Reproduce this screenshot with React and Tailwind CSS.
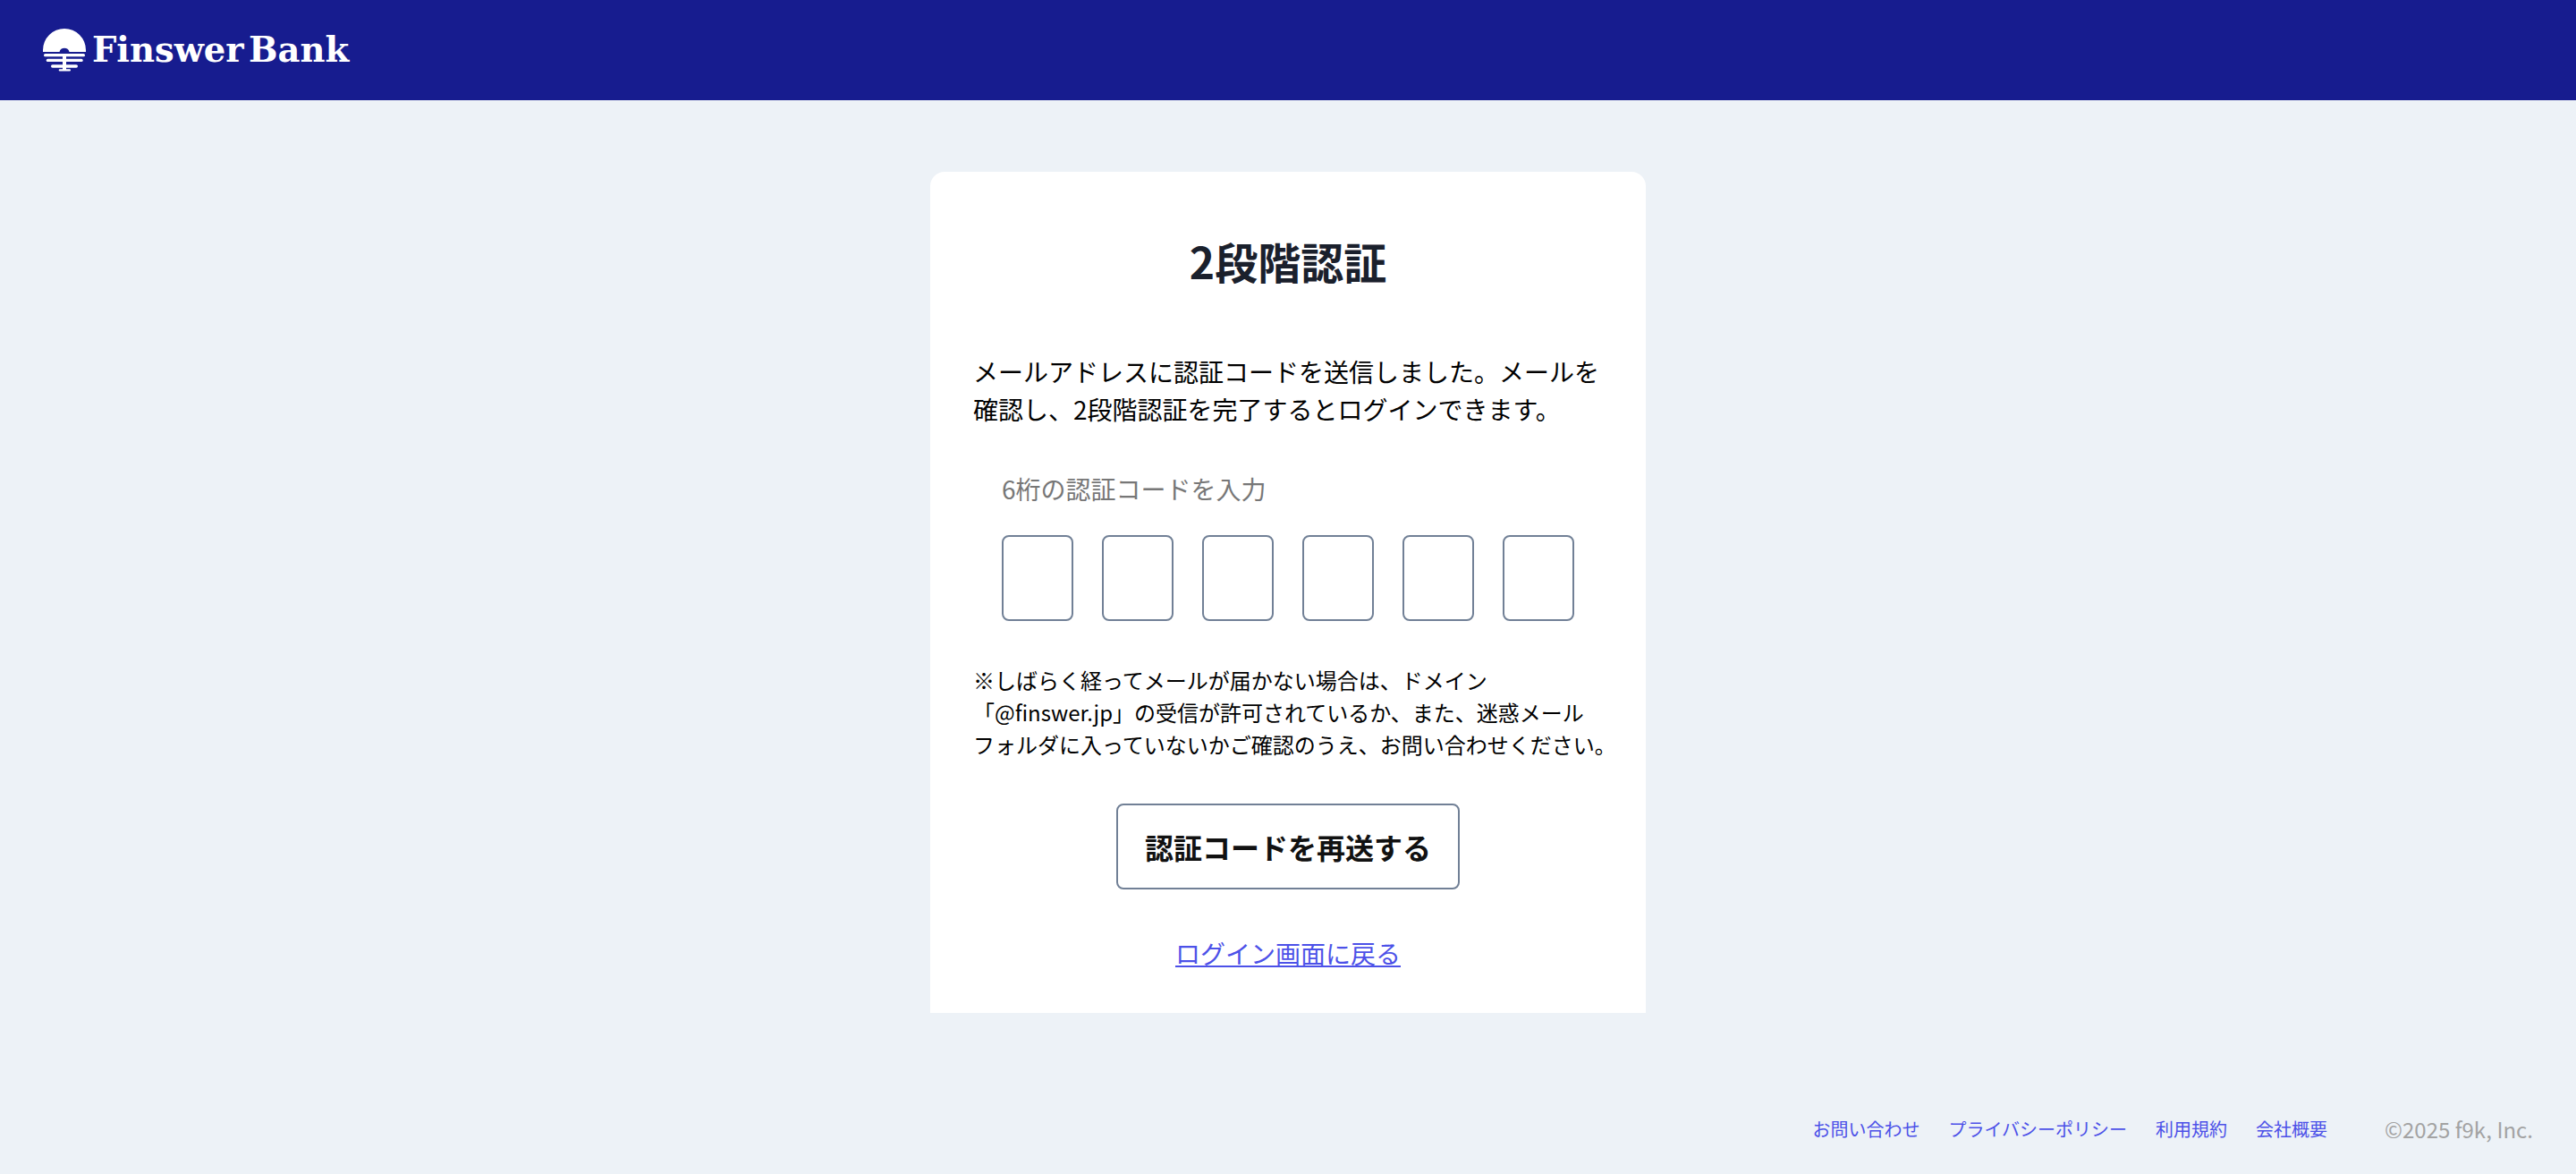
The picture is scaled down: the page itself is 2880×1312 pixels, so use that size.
import React from 'react';

const footerLinks = ['お問い合わせ', 'プライバシーポリシー', '利用規約', '会社概要'];

function Logo() {
  return (
    <div className="flex items-center">
      <svg width="50" height="50" viewBox="0 0 50 50" className="block" fill="#fff">
        <path d="M1 27v-2a24 24 0 0 1 48 0v2H30.500a5.700 5.700 0 0 0-11 0z" />
        <rect x="2" y="29" width="46" height="3.300" rx="1.600" />
        <rect x="4.700" y="34.700" width="41" height="3.300" rx="1.600" />
        <rect x="10" y="41.300" width="30" height="3.400" rx="1.700" />
        <rect x="18.700" y="46.300" width="13.300" height="2.200" rx="1.100" />
        <rect x="23" y="32" width="4" height="15" />
      </svg>
      <span className="ml-[6px] font-['DejaVu_Serif',serif] text-[38.500px] leading-none font-bold text-white [word-spacing:-8px]">
        Finswer Bank
      </span>
    </div>
  );
}

export default function App() {
  return (
    <div className="flex min-h-screen flex-col bg-[#edf2f7] font-['Noto_Sans_CJK_JP','Noto_Sans',sans-serif] text-black">
      <header className="flex h-[112px] items-center bg-[#171c8f] pl-[47px]">
        <Logo />
      </header>

      <main className="flex flex-1 justify-center pt-20">
        <div className="h-[940px] w-[800px] rounded-t-2xl bg-white px-12 pt-[63px]">
          <h1 className="text-center text-[48px] leading-[72px] font-bold text-[#1a202c]">2段階認証</h1>

          <p className="mt-[67px] text-[28px] leading-[42px]">
            メールアドレスに認証コードを送信しました。メールを確認し、2段階認証を完了するとログインできます。
          </p>

          <div className="mt-[47px] px-8">
            <div className="text-[28px] leading-[42px] text-[#777777]">6桁の認証コードを入力</div>
            <div className="mt-[31px] flex gap-8">
              {[0, 1, 2, 3, 4, 5].map((i) => (
                <div key={i} className="h-[96px] w-[80px] rounded-lg border-2 border-[#718096] bg-white" />
              ))}
            </div>
          </div>

          <p className="mt-[48px] text-[24px] leading-[36px] whitespace-nowrap">
            ※しばらく経ってメールが届かない場合は、ドメイン<br />
            「@finswer.jp」の受信が許可されているか、また、迷惑メール<br />
            フォルダに入っていないかご確認のうえ、お問い合わせください。
          </p>

          <div className="mt-[48px] flex justify-center">
            <button type="button" className="h-[96px] rounded-lg border-2 border-[#718096] bg-white px-[30px] text-[32px] font-bold text-[#111]">
              認証コードを再送する
            </button>
          </div>

          <div className="mt-[50px] text-center">
            <a href="#" className="text-[28px] leading-[42px] text-[#4c51e8] underline">ログイン画面に戻る</a>
          </div>
        </div>
      </main>

      <footer className="flex h-[100px] items-center justify-end pr-12">
        <nav className="flex gap-8 text-[20px] text-[#4c51e8]">
          {footerLinks.map((label) => (
            <a key={label} href="#">{label}</a>
          ))}
        </nav>
        <div className="ml-[64px] text-[24px] text-[#a3a3a3]">©2025 f9k, Inc.</div>
      </footer>
    </div>
  );
}
